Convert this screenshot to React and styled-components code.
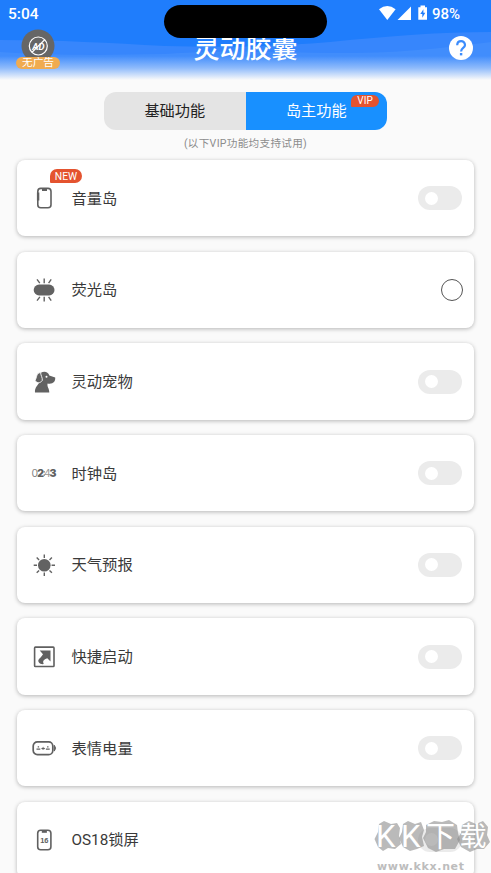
import React from 'react'
import styled, { createGlobalStyle } from 'styled-components'

const App = () => {
  return (
    <Page>
      <GlobalStyle />
      <Header>
        <Waves />
        <StatusBar>
          <span>5:04</span>
          <StatusRight>
            <StatusIcons />
            <span>98%</span>
          </StatusRight>
        </StatusBar>
        <AppBar>
          <NoAds>
            <NoAdsIcon />
            <NoAdsLabel>无广告</NoAdsLabel>
          </NoAds>
          <Title>灵动胶囊</Title>
          <HelpIcon />
        </AppBar>
        <Capsule />
      </Header>

      <Tabs>
        <Tab>基础功能</Tab>
        <Tab $active>
          岛主功能
          <VipBadge>VIP</VipBadge>
        </Tab>
      </Tabs>
      <Note>(以下VIP功能均支持试用)</Note>

      <List>
        {items.map((item) => (
          <Card key={item.label}>
            <IconBox>
              <item.icon />
              {item.isNew && <NewBadge>NEW</NewBadge>}
            </IconBox>
            <Label>{item.label}</Label>
            {item.radio ? <Radio /> : <Switch><Knob /></Switch>}
          </Card>
        ))}
      </List>
      <Watermark />
    </Page>
  )
}

const Waves = () => (
  <WaveSvg viewBox="0 0 491 80" preserveAspectRatio="none">
    <defs>
      <linearGradient id="fade" x1="0" y1="0" x2="0" y2="1">
        <stop offset="0" stopColor="#fafafa" stopOpacity="0" />
        <stop offset="0.5" stopColor="#fafafa" stopOpacity="0.42" />
        <stop offset="1" stopColor="#fafafa" />
      </linearGradient>
    </defs>
    <rect width="491" height="80" fill="#1f7dfc" />
    <path d="M0 40C60 40 110 43 165 46C230 48 280 46 330 42C390 36 440 32 491 32V80H0Z" fill="#3786fc" />
    <path d="M0 52C60 56 110 55 165 54C230 50 280 52 330 53C400 54 450 47 491 42V80H0Z" fill="#418dfc" />
    <rect y="56" width="491" height="24" fill="url(#fade)" />
  </WaveSvg>
)

const StatusIcons = () => (
  <svg width="50" height="18" viewBox="379 5 50 18" fill="#fff">
    <path d="M379 9.2Q387.300 2.800 395.600 9.200L387.300 20Z" />
    <path d="M411 6.500V20H397.500Z" />
    <path d="M420.500 5.500H425V7.300H427V19.800H418.300V7.300H420.500Z" />
    <path d="M423.400 9.300L420.300 14H422.300V17.800L425.300 12.800H423.400Z" fill="#1f7dfc" />
  </svg>
)

const NoAdsIcon = () => (
  <svg width="34" height="34" viewBox="0 0 34 34">
    <circle cx="17" cy="17" r="16.500" fill="#666" />
    <g fill="none" stroke="#fff" strokeWidth="1.200">
      <circle cx="17.300" cy="17" r="9" />
      <path d="M23.700 10.700L11 23.300" />
    </g>
    <text x="17.300" y="20.500" textAnchor="middle" fontSize="9.500" fontWeight="700" fontStyle="italic" fill="#fff" fontFamily="Roboto, sans-serif">AD</text>
  </svg>
)

const HelpIcon = () => (
  <svg width="24" height="24" viewBox="0 0 24 24">
    <circle cx="12" cy="12" r="12" fill="#fff" />
    <path d="M8.200 9.300C8.200 3.700 16 3.900 16 9C16 12 12.100 12 12.100 15.500" fill="none" stroke="#3c8cfc" strokeWidth="2.200" />
    <rect x="10.900" y="17" width="2.400" height="2.400" fill="#3c8cfc" />
  </svg>
)

const VolumeIcon = () => (
  <svg width="26" height="26" viewBox="0 0 26 26" fill="none" stroke="#606060">
    <rect x="6.800" y="3.400" width="13.200" height="19.400" rx="3" strokeWidth="1.600" />
    <path d="M11 3.600H16V6H11Z" fill="#606060" stroke="none" />
    <path d="M7.100 7.500V15.500" strokeWidth="2.400" />
  </svg>
)

const GlowIcon = () => (
  <svg width="26" height="26" viewBox="0 0 26 26">
    <rect x="2.700" y="7.600" width="20.800" height="10.800" rx="5.400" fill="#626262" />
    <path d="M13.200 1.600V6.300M6 2.400L8.800 6.200M20.200 2.400L17.600 6.200M13.200 19.800V24.600M6 23.600L8.900 19.800M20.200 23.600L17.600 19.800" stroke="#626262" strokeWidth="1.400" fill="none" />
  </svg>
)

const DogIcon = () => (
  <svg width="26" height="26" viewBox="0 0 26 26" fill="#626262">
    <path d="M4 23.500C3.600 19.500 5.500 17.500 8 14L9.500 4C13.500 1.800 17 2.900 18.300 6.600L24.200 8.600C24.600 12.800 22 15.400 16.600 14.500C15.800 18 18.300 19 18.300 23.500Z" />
    <path d="M9.600 3.600C5 3.800 6.300 8 4 11.300C5.600 14.300 9.200 14.600 11.300 11.400C11.600 8.500 9.800 6.700 9.600 3.600Z" stroke="#fff" strokeWidth="0.900" />
    <circle cx="15.500" cy="7.700" r="1" fill="#fff" />
  </svg>
)

const ClockIcon = () => (
  <svg width="26" height="26" viewBox="0 0 26 26" fontFamily="Inter, sans-serif" fontSize="10.400" fill="#606060">
    <text x="0.600" y="16.700" fill="#858585">0</text>
    <text x="6.200" y="16.700" fontWeight="900">2</text>
    <text x="13" y="16.700" fill="#999">4</text>
    <text x="18.500" y="16.700" fontWeight="900">3</text>
    <path d="M12.600 11.300H13.800V12.500H12.600ZM12.600 14.600H13.800V15.800H12.600Z" />
  </svg>
)

const SunIcon = () => (
  <svg width="26" height="26" viewBox="0 0 26 26">
    <circle cx="13.300" cy="13.200" r="6.300" fill="#626262" />
    <path d="M13.300 2.400V6M13.300 20.600V24M2.700 13.200H6M20.600 13.200H24M5.700 5.600L8.100 8M18.500 18.400L20.900 20.800M5.700 20.800L8.100 18.400M18.500 8L20.900 5.600" stroke="#626262" strokeWidth="1.400" />
  </svg>
)

const ShortcutIcon = () => (
  <svg width="26" height="26" viewBox="0 0 26 26">
    <rect x="3.600" y="3.100" width="19.400" height="19.400" rx="0.800" fill="none" stroke="#606060" strokeWidth="1.600" />
    <path d="M8.700 6.600H19.500V17.400L16.300 14.300C12.600 15.800 11.300 17.100 12.800 20.100C8.900 20.700 6.200 17.700 7.700 15.500C8.500 14.300 10.500 12.800 12 10.200Z" fill="#606060" />
  </svg>
)

const FaceBatteryIcon = () => (
  <svg width="26" height="26" viewBox="0 0 26 26" fill="none" stroke="#606060">
    <rect x="2.200" y="6.800" width="19.600" height="12.800" rx="4.200" strokeWidth="1.700" />
    <path d="M23.300 10.300Q25.800 13.200 23.300 16.100Z" fill="#606060" strokeWidth="1" />
    <path d="M5.500 14.200H9.300M14.900 14.200H18.700M6.700 11.900H8.100M16.100 11.900H17.500M10.700 13Q11.500 14.600 12.100 13.100Q12.800 14.600 13.600 13" strokeWidth="1.200" />
  </svg>
)

const LockIcon = () => (
  <svg width="26" height="26" viewBox="0 0 26 26">
    <rect x="6.700" y="3.200" width="13.200" height="19.600" rx="3" fill="none" stroke="#606060" strokeWidth="1.600" />
    <path d="M10.800 3.500H15.900V5.800H10.800Z" fill="#606060" />
    <text x="13.300" y="16.300" textAnchor="middle" fontFamily="Liberation Sans, sans-serif" fontWeight="700" fontSize="7.500" fill="#606060">16</text>
  </svg>
)

const Watermark = () => (
  <WatermarkSvg viewBox="374 818 117 55">
    <g fill="#8c8c8c" fillOpacity="0.600">
      <path d="M379 824L384 821L391 824L397 823L400 828L399 836L401 844L395 849L388 848L383 851L378 847L374.500 839L378 832Z" />
      <path d="M403 824L408 821L415 824L421 822L424 830L422 837L424 846L417 849L410 851L403 847L399 838L402 832Z" />
      <path d="M426 825L434 821L442 822L449 820L457 825L458 833L460 840L455 849L444 849L436 852L428 848L423 838L426 832Z" />
      <path d="M462 825L469 821L476 824L483 821L488 827L487 835L490 842L484 849L477 849L470 852L461 847L457 839L461 833Z" />
    </g>
    <g fill="#fff" fontFamily="Roboto, 'Noto Sans CJK SC', sans-serif">
      <text x="376" y="846.500" fontSize="31" fontWeight="400">K</text>
      <text x="401" y="846.500" fontSize="31" fontWeight="400">K</text>
      <text x="426" y="847" fontSize="29">下</text>
      <text x="459.500" y="846" fontSize="27">载</text>
    </g>
    <text x="377" y="870" textLength="87" fontSize="11" fontWeight="700" fontFamily="DejaVu Sans, sans-serif" fill="#bdbdbd">www.kkx.net</text>
  </WatermarkSvg>
)

const items = [
  { label: '音量岛', icon: VolumeIcon, isNew: true },
  { label: '荧光岛', icon: GlowIcon, radio: true },
  { label: '灵动宠物', icon: DogIcon },
  { label: '时钟岛', icon: ClockIcon },
  { label: '天气预报', icon: SunIcon },
  { label: '快捷启动', icon: ShortcutIcon },
  { label: '表情电量', icon: FaceBatteryIcon },
  { label: 'OS18锁屏', icon: LockIcon },
]

const GlobalStyle = createGlobalStyle`
  body {
    margin: 0;
    background: #fafafa;
  }
  * {
    box-sizing: border-box;
  }
  svg {
    display: block;
    flex-shrink: 0;
  }
`;

const Page = styled.div`
  position: relative;
  display: flex;
  flex-direction: column;
  align-items: center;
  height: 873px;
  overflow: hidden;
  background: #fafafa;
  color: #3a3a3a;
  font-family: Roboto, 'Noto Sans CJK SC', sans-serif;
`;

const Header = styled.header`
  position: relative;
  width: 100%;
  height: 80px;
  flex-shrink: 0;
  color: #fff;
`;

const WaveSvg = styled.svg`
  position: absolute;
  inset: 0;
  width: 100%;
  height: 100%;
`;

const StatusBar = styled.div`
  position: relative;
  display: flex;
  justify-content: space-between;
  align-items: center;
  height: 28px;
  padding: 0 31px 0 8px;
  font-size: 15.500px;
  font-weight: 500;
`;

const StatusRight = styled.div`
  display: flex;
  align-items: center;
  gap: 3px;
  font-size: 15px;
`;

const AppBar = styled.div`
  position: relative;
  display: grid;
  grid-template-columns: 44px 1fr 44px;
  align-items: start;
  justify-items: center;
  padding: 1px 16px 0;

  & > svg {
    justify-self: end;
    margin: 6.500px 2px 0 0;
  }
`;

const NoAds = styled.div`
  display: flex;
  flex-direction: column;
  align-items: center;
`;

const NoAdsLabel = styled.span`
  position: relative;
  width: 44px;
  height: 12px;
  margin-top: -6px;
  border-radius: 6px;
  background: #f0ab50;
  font-size: 10.700px;
  line-height: 12px;
  text-align: center;
`;

const Title = styled.h1`
  margin: 2px 0 0;
  font-size: 26px;
  line-height: 36px;
  font-weight: 500;
`;

const Capsule = styled.div`
  position: absolute;
  top: 5px;
  left: 164px;
  width: 163px;
  height: 33px;
  border-radius: 17px;
  background: #000;
`;

const Tabs = styled.div`
  display: flex;
  width: 283px;
  height: 38px;
  margin-top: 12px;
  border-radius: 12px;
  overflow: hidden;
  flex-shrink: 0;
`;

const Tab = styled.div`
  position: relative;
  flex: 1;
  text-align: center;
  font-size: 15.200px;
  line-height: 38px;
  background: ${(p) => (p.$active ? '#1890ff' : '#e4e4e4')};
  color: ${(p) => (p.$active ? '#fff' : '#222')};
`;

const VipBadge = styled.span`
  position: absolute;
  top: 3px;
  right: 8px;
  width: 28px;
  height: 12px;
  border-radius: 6px 6px 6px 1px;
  background: #e4532f;
  color: #fff;
  font-size: 10px;
  line-height: 12px;
`;

const Note = styled.div`
  height: 30px;
  padding-top: 5px;
  font-size: 10.600px;
  line-height: 17px;
  letter-spacing: 0.300px;
  color: #8c8c8c;
  flex-shrink: 0;
`;

const List = styled.div`
  display: flex;
  flex-direction: column;
  gap: 15.400px;
  width: 100%;
  padding: 0 17px;
`;

const Card = styled.div`
  display: flex;
  align-items: center;
  height: 76.300px;
  flex-shrink: 0;
  padding: 0 12px 0 14px;
  border-radius: 8px;
  background: #fff;
  box-shadow: 0 1px 4px rgba(0, 0, 0, 0.280);
`;

const IconBox = styled.div`
  position: relative;
  width: 26px;
  height: 26px;
`;

const NewBadge = styled.span`
  position: absolute;
  left: 19px;
  top: -16px;
  width: 32px;
  height: 14px;
  border-radius: 7px 7px 7px 1px;
  background: #e4532f;
  color: #fff;
  font-size: 10.300px;
  line-height: 15px;
  text-align: center;
`;

const Label = styled.span`
  flex: 1;
  margin-left: 14.500px;
  padding-top: 1px;
  font-size: 15.300px;
  line-height: 24px;
`;

const Switch = styled.div`
  display: flex;
  align-items: center;
  width: 44px;
  height: 24px;
  padding-left: 6.500px;
  border-radius: 12px;
  background: #ebebeb;
`;

const Knob = styled.div`
  width: 13px;
  height: 13px;
  border-radius: 50%;
  background: #fff;
`;

const Radio = styled.div`
  width: 22px;
  height: 22px;
  margin-right: -1px;
  border: 1px solid #555;
  border-radius: 50%;
`;

const WatermarkSvg = styled.svg`
  position: absolute;
  right: 0;
  bottom: 0;
  width: 117px;
  height: 55px;
`;

export default App
